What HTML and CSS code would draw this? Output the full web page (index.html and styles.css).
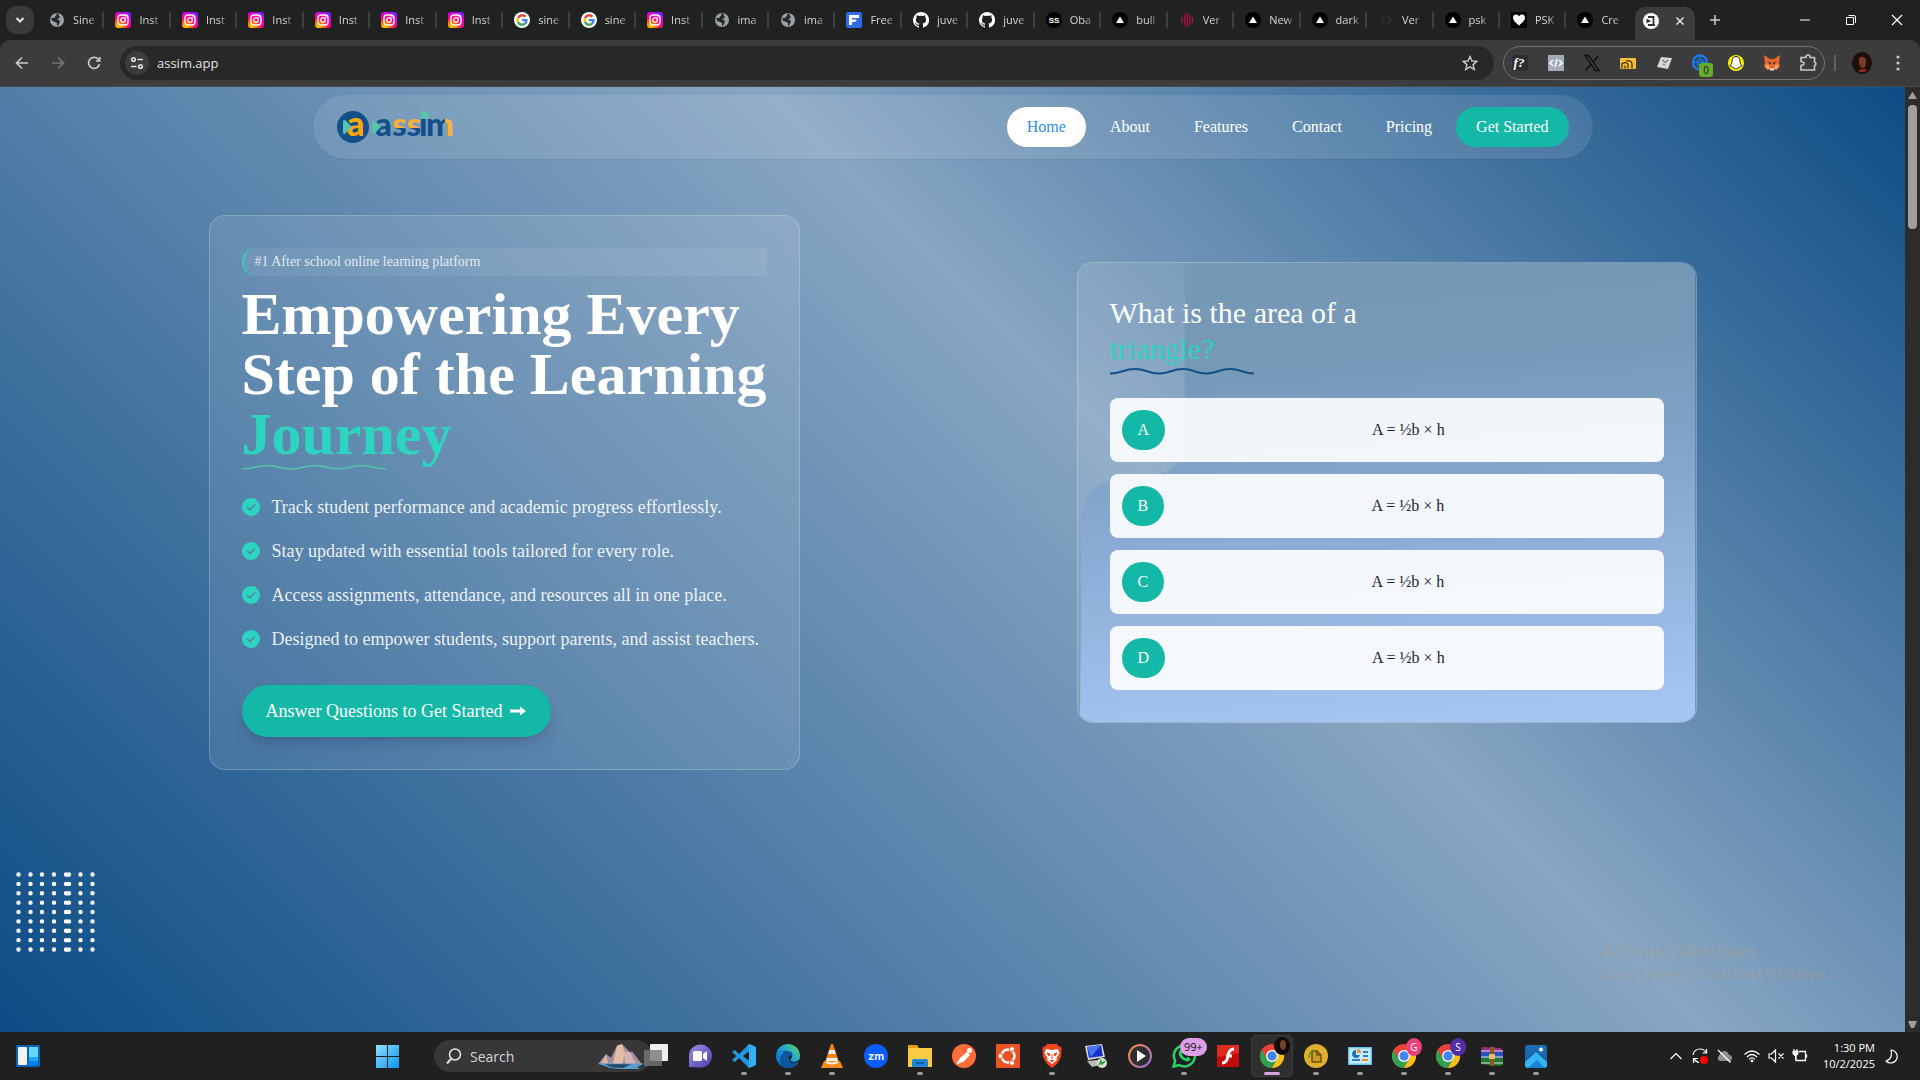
FILE: index.html
```
<!DOCTYPE html>
<html lang="en">
<head>
<meta charset="utf-8">
<title>assim.app</title>
<link rel="stylesheet" href="styles.css">
</head>
<body>
<svg class="sprite" aria-hidden="true">
  <defs>
    <radialGradient id="insta-fill" cx="0.2" cy="1" r="1.1"><stop offset="0" stop-color="#ffd400"/><stop offset="0.3" stop-color="#ff7a00"/><stop offset="0.55" stop-color="#ff0a6c"/><stop offset="0.8" stop-color="#e800c8"/><stop offset="1" stop-color="#7a1cff"/></radialGradient>
    <linearGradient id="win-fill" x1="0" y1="0" x2="1" y2="1"><stop offset="0" stop-color="#8fe0ff"/><stop offset="1" stop-color="#0a94f0"/></linearGradient>
    <linearGradient id="edge-fill" x1="0" y1="1" x2="1" y2="0"><stop offset="0" stop-color="#0c59a4"/><stop offset="0.5" stop-color="#1b9de2"/><stop offset="1" stop-color="#5fe05a"/></linearGradient>
    <linearGradient id="photo-fill" x1="0" y1="0" x2="0" y2="1"><stop offset="0" stop-color="#1c6fb8"/><stop offset="1" stop-color="#1258a0"/></linearGradient>
    <linearGradient id="teams-fill" x1="0" y1="0" x2="1" y2="1"><stop offset="0" stop-color="#9a8fe0"/><stop offset="1" stop-color="#4a3fae"/></linearGradient>
    <linearGradient id="media-ring" x1="0" y1="0" x2="1" y2="1"><stop offset="0" stop-color="#ff8a3c"/><stop offset="1" stop-color="#9a6ae8"/></linearGradient>
    <symbol id="i-globe" viewBox="0 0 16 16"><circle cx="8" cy="8" r="7" fill="#9aa0a6"/><path d="M2 6.500q2-1 3.500-.5 0-2 2-2.500L7 1.500 10 2q-1 2 1 2.500l-1 2-2 .5 3 2-1 3-2 2.500v-3.500L5 9.500Q3 9.500 2 6.500z" fill="#26292a"/></symbol>
    <symbol id="i-insta" viewBox="0 0 16 16"><rect width="16" height="16" rx="3" fill="url(#insta-fill)"/><rect x="3" y="3" width="10" height="10" rx="3" fill="none" stroke="#fff" stroke-width="1.300"/><circle cx="8" cy="8" r="2.300" fill="none" stroke="#fff" stroke-width="1.300"/><circle cx="11" cy="5" r=".8" fill="#fff"/></symbol>
    <symbol id="i-google" viewBox="0 0 16 16"><circle cx="8" cy="8" r="8" fill="#fff"/><g fill="none" stroke-width="2.300"><path d="M11.500 4.800A4.500 4.500 0 0 0 4 6" stroke="#ea4335"/><path d="M4 6a4.500 4.500 0 0 0 0 4" stroke="#fbbc05"/><path d="M4 10a4.500 4.500 0 0 0 7 1.600" stroke="#34a853"/><path d="M11 11.600A4.500 4.500 0 0 0 12.500 8.200H8" stroke="#4285f4"/></g></symbol>
    <symbol id="i-free" viewBox="0 0 16 16"><rect width="16" height="16" rx="2" fill="#2f6bed"/><path d="M3 3h10v3H6v1.500h5l-2 2.500H6v3H3z" fill="#fff"/></symbol>
    <symbol id="i-github" viewBox="0 0 16 16"><path d="M8 0a8 8 0 0 0-2.500 15.600c.4.100.5-.2.500-.4v-1.400c-2.200.5-2.700-1-2.700-1-.4-.9-.9-1.200-.9-1.200-.7-.5.100-.5.100-.5.800.1 1.200.8 1.200.8.700 1.200 1.900.9 2.300.7.100-.5.300-.9.500-1.100-1.800-.2-3.600-.9-3.600-4 0-.9.300-1.600.8-2.100-.1-.2-.4-1 .1-2.100 0 0 .7-.2 2.200.8a7.500 7.500 0 0 1 4 0c1.500-1 2.200-.8 2.200-.8.400 1.100.2 1.900.1 2.100.5.600.8 1.300.8 2.100 0 3.100-1.900 3.800-3.700 4 .3.300.6.800.6 1.500v2.200c0 .2.100.5.600.4A8 8 0 0 0 8 0z" fill="#fff"/></symbol>
    <symbol id="i-ss" viewBox="0 0 16 16"><circle cx="8" cy="8" r="8" fill="#000"/><text x="8" y="10.500" text-anchor="middle" font-family="Liberation Sans, sans-serif" font-weight="700" font-size="8" fill="#fff">SS</text></symbol>
    <symbol id="i-vercel" viewBox="0 0 16 16"><circle cx="8" cy="8" r="8" fill="#000"/><path d="M8 4.500 12 11H4z" fill="#fff"/></symbol>
    <symbol id="i-bars" viewBox="0 0 16 16"><path d="M3 5v6M6 2v12M8.500 0v16M11 3v10M13.500 5v6" stroke="#a3123c" stroke-width="1.400"/></symbol>
    <symbol id="i-dim" viewBox="0 0 16 16"><path d="M6 4 4 6v4l2 2M9 4l3 2v4l-3 2" fill="none" stroke="#303333" stroke-width="1.500"/></symbol>
    <symbol id="i-heart" viewBox="0 0 16 16"><rect width="16" height="16" rx="1" fill="#000"/><path d="M8 13.500C3 9.500 2 7.500 2 5.500 2 2 6.500 1.500 8 4.500 9.500 1.500 14 2 14 5.500c0 2-1 4-6 8z" fill="#fff"/></symbol>
    <symbol id="i-assim" viewBox="0 0 16 16"><circle cx="8" cy="8" r="8" fill="#fff"/><path d="M5 4h5.500v8.500M5 12h7" fill="none" stroke="#333" stroke-width="1.800"/><path d="M3.500 5.500 8 8l-4.500 2.500z" fill="#333"/></symbol>
    <symbol id="i-chrome" viewBox="0 0 24 24"><circle cx="12" cy="12" r="12" fill="#ea4335"/><path d="M1.600 6A12 12 0 0 0 12 24l5.200-9L12 12 6.800 15z" fill="#2fa14f"/><path d="M12 24A12 12 0 0 0 22.400 6H12l5.200 9z" fill="#fbc116"/><circle cx="12" cy="12" r="6" fill="#fff"/><circle cx="12" cy="12" r="4.700" fill="#4285f4"/></symbol>
    <symbol id="i-check" viewBox="0 0 18 18"><circle cx="9" cy="9" r="9" fill="#2dd4bf"/><path d="m5.500 9.300 2.500 2.500 4.500-4.800" fill="none" stroke="#5583a9" stroke-width="1.600" stroke-linecap="round" stroke-linejoin="round"/></symbol>
    <symbol id="i-wave" viewBox="0 0 144 8" preserveAspectRatio="none"><path d="M0 6.500C11 6.500 14 2 25 2S38 6.500 49 6.500 62 2 73 2 85 6.500 96 6.500 109 2 120 2 133 6.500 144 6.500" fill="none" stroke="currentColor" stroke-width="2"/></symbol>
  </defs>
</svg>

<header class="chrome">
  <div class="tabstrip">
    <button class="tab-search" aria-label="Search tabs"><svg width="12" height="12" viewBox="0 0 12 12"><path d="m2.500 4 3.500 3.500L9.500 4" fill="none" stroke="#e3e3e3" stroke-width="2"/></svg></button>
    <nav class="tabs" aria-label="Open tabs">
      <a class="tab" href="#"><svg><use href="#i-globe"/></svg><span>Sine</span></a>
      <a class="tab" href="#"><svg><use href="#i-insta"/></svg><span>Inst</span></a>
      <a class="tab" href="#"><svg><use href="#i-insta"/></svg><span>Inst</span></a>
      <a class="tab" href="#"><svg><use href="#i-insta"/></svg><span>Inst</span></a>
      <a class="tab" href="#"><svg><use href="#i-insta"/></svg><span>Inst</span></a>
      <a class="tab" href="#"><svg><use href="#i-insta"/></svg><span>Inst</span></a>
      <a class="tab" href="#"><svg><use href="#i-insta"/></svg><span>Inst</span></a>
      <a class="tab" href="#"><svg><use href="#i-google"/></svg><span>sine</span></a>
      <a class="tab" href="#"><svg><use href="#i-google"/></svg><span>sine</span></a>
      <a class="tab" href="#"><svg><use href="#i-insta"/></svg><span>Inst</span></a>
      <a class="tab" href="#"><svg><use href="#i-globe"/></svg><span>ima</span></a>
      <a class="tab" href="#"><svg><use href="#i-globe"/></svg><span>ima</span></a>
      <a class="tab" href="#"><svg><use href="#i-free"/></svg><span>Free</span></a>
      <a class="tab" href="#"><svg><use href="#i-github"/></svg><span>juve</span></a>
      <a class="tab" href="#"><svg><use href="#i-github"/></svg><span>juve</span></a>
      <a class="tab" href="#"><svg><use href="#i-ss"/></svg><span>Oba</span></a>
      <a class="tab" href="#"><svg><use href="#i-vercel"/></svg><span>bull</span></a>
      <a class="tab" href="#"><svg><use href="#i-bars"/></svg><span>Ver</span></a>
      <a class="tab" href="#"><svg><use href="#i-vercel"/></svg><span>New</span></a>
      <a class="tab" href="#"><svg><use href="#i-vercel"/></svg><span>dark</span></a>
      <a class="tab" href="#"><svg><use href="#i-dim"/></svg><span>Ver</span></a>
      <a class="tab" href="#"><svg><use href="#i-vercel"/></svg><span>psk</span></a>
      <a class="tab" href="#"><svg><use href="#i-heart"/></svg><span>PSK</span></a>
      <a class="tab" href="#"><svg><use href="#i-vercel"/></svg><span>Cre</span></a>
    </nav>
    <div class="tab-active">
      <svg width="16" height="16"><use href="#i-assim"/></svg>
      <button class="plain" aria-label="Close tab"><svg width="10" height="10" viewBox="0 0 10 10"><path d="m1.500 1.500 7 7m0-7-7 7" stroke="#e3e3e3" stroke-width="1.500"/></svg></button>
    </div>
    <button class="plain new-tab" aria-label="New tab"><svg width="12" height="12" viewBox="0 0 12 12"><path d="M6 1v10M1 6h10" stroke="#cfcfcf" stroke-width="1.500"/></svg></button>
    <div class="window-buttons">
      <button class="plain" aria-label="Minimize"><svg width="12" height="12" viewBox="0 0 12 12"><path d="M1 6h10" stroke="#fff" stroke-width="1"/></svg></button>
      <button class="plain" aria-label="Restore"><svg width="12" height="12" viewBox="0 0 12 12"><path d="M1.500 3.500h7v7h-7zM3.500 1.500H9q1.500 0 1.500 1.500v6" fill="none" stroke="#fff"/></svg></button>
      <button class="plain" aria-label="Close"><svg width="12" height="12" viewBox="0 0 12 12"><path d="m1 1 10 10m0-10L1 11" stroke="#fff" stroke-width="1.200"/></svg></button>
    </div>
  </div>
  <div class="toolbar">
    <div class="history">
      <button class="plain" aria-label="Back"><svg width="14" height="14" viewBox="0 0 14 14"><path d="M13 7H2m5-5.500L1.500 7 7 12.500" fill="none" stroke="#c9c9c9" stroke-width="1.700"/></svg></button>
      <button class="plain" aria-label="Forward"><svg width="14" height="14" viewBox="0 0 14 14"><path d="M1 7h11M7 1.500 12.500 7 7 12.500" fill="none" stroke="#757575" stroke-width="1.700"/></svg></button>
      <button class="plain" aria-label="Reload"><svg width="14" height="14" viewBox="0 0 14 14"><path d="M12.500 8A5.500 5.500 0 1 1 11 3l1.500 1.500M12.700 1v4H9" fill="none" stroke="#c9c9c9" stroke-width="1.700"/></svg></button>
    </div>
    <div class="omnibox">
      <button class="site-info" aria-label="Site information"><svg width="14" height="14" viewBox="0 0 14 14"><g fill="none" stroke="#dedede" stroke-width="1.600"><circle cx="3.500" cy="3.500" r="1.800"/><path d="M7.500 3.500H13M1 10.500h5.500"/><circle cx="10.500" cy="10.500" r="1.800"/></g></svg></button>
      <input class="url" type="text" aria-label="Address" value="assim.app">
      <button class="plain" aria-label="Bookmark"><svg width="16" height="16" viewBox="0 0 16 16"><path d="m8 1.500 2 4.500 4.800.4-3.700 3.200 1.200 4.800L8 11.800l-4.300 2.600 1.200-4.800L1.200 6.400 6 6z" fill="none" stroke="#c9c9c9" stroke-width="1.400"/></svg></button>
    </div>
    <div class="extensions">
      <svg viewBox="0 0 18 18"><rect x="1" y="1" width="16" height="16" rx="2" fill="#2c2d2e"/><text x="8" y="13" text-anchor="middle" font-family="Liberation Serif, serif" font-style="italic" font-weight="700" font-size="13" fill="#fff">f?</text></svg>
      <svg viewBox="0 0 18 18"><rect x="1" y="1" width="16" height="16" fill="#a4adbb"/><path d="M6 6 3 9l3 3M12 6l3 3-3 3M10 5l-2 8" fill="none" stroke="#fff" stroke-width="1.400"/></svg>
      <svg viewBox="0 0 18 18"><path d="M2 1.500h3.500L16 16.500h-3.500zM15.500 1.500 10.300 7.800M8 10.200l-5.500 6.300" fill="none" stroke="#0b0b0b" stroke-width="1.300"/></svg>
      <svg viewBox="0 0 18 18"><rect x="1" y="4" width="16" height="11" rx="1" fill="#f5bd3a"/><path d="M3 14.500V9.500q5-2 6 1v4M6 14.500v-3M7 7q6-1 6 3v4.500" fill="none" stroke="#3a2b0a" stroke-width="1.200"/></svg>
      <svg viewBox="0 0 18 18"><path d="m6 3 11 1-4 11-11-2z" fill="#d8d8d8"/><path d="m7.500 6 2.500 2.500L13.500 6M8 10l2 1" fill="none" stroke="#777" stroke-width="1.200"/></svg>
      <span class="ext-count"><svg viewBox="0 0 18 18"><circle cx="9" cy="8.500" r="7" fill="none" stroke="#1877f2" stroke-width="2.500"/><circle cx="9" cy="8.500" r="3" fill="none" stroke="#1877f2" stroke-width="1.500"/><path d="M9 1v15M1.500 8.500h15" stroke="#1877f2"/></svg><b>0</b></span>
      <svg viewBox="0 0 18 18"><circle cx="9" cy="9" r="8" fill="#fff200"/><path d="M9 2.500c3 0 4 2 4 5 0 2 1 3 2 4-2 1-2 1-2.500 2-2 0-2 1.500-3.500 1.500S7.500 13.500 5.500 13.500C5 12.500 5 12.500 3 11.500c1-1 2-2 2-4 0-3 1-5 4-5z" fill="#fff" stroke="#222" stroke-width="1"/></svg>
      <svg viewBox="0 0 18 18"><path d="m1 1 6 4h4l6-4-1 8 1 4-4 3-2-1H7l-2 1-4-3 1-4z" fill="#e8662a"/><path d="m2 10 4 1 1 4-3 .5zM16 10l-4 1-1 4 3 .5z" fill="#f7a066"/><path d="M6 8l1.500 2M12 8l-1.500 2" stroke="#263238" stroke-width="1.400"/><path d="M7 14.500h4v2H7z" fill="#ddd"/></svg>
      <svg viewBox="0 0 18 18"><path d="M2 3.500h5V3a2 2 0 0 1 4 0v.5h4.500v4.500a1.800 1.800 0 0 1 0 3.500v4.500H2v-4.500q3-.5 3-2T2 7.500z" fill="none" stroke="#c9c9c9" stroke-width="1.600"/></svg>
    </div>
    <span class="toolbar-rule"></span>
    <svg class="avatar" width="20" height="24" viewBox="0 0 20 24"><ellipse cx="10" cy="12" rx="10" ry="11" fill="#1f0f0b"/><path d="M7 7q3-3 7 1v5q-1 4-3 4t-4-4z" fill="#7a3a25"/><path d="M6 20q2-2 5-2t4 1q-3 4-9 1z" fill="#8c2a22"/></svg>
    <button class="plain menu" aria-label="Menu"><svg width="4" height="18" viewBox="0 0 4 18" fill="#c9c9c9"><circle cx="2" cy="3" r="1.600"/><circle cx="2" cy="9" r="1.600"/><circle cx="2" cy="15" r="1.600"/></svg></button>
  </div>
</header>

<div class="window">
  <div class="page">
    <nav class="site-nav">
      <a class="logo" href="#" aria-label="assim">
        <svg width="116" height="34" viewBox="0 0 116 34">
          <defs>
            <linearGradient id="word-s" x1="0" y1="0" x2="0" y2="1"><stop offset="0.62" stop-color="#fbb03b"/><stop offset="0.63" stop-color="#13508a"/></linearGradient>
            <linearGradient id="word-m" x1="0" y1="0" x2="1" y2="0"><stop offset="0.68" stop-color="#13508a"/><stop offset="0.69" stop-color="#fbb03b"/></linearGradient>
          </defs>
          <circle cx="16" cy="17" r="16" fill="#13508a"/>
          <g font-family="Lato, sans-serif" font-weight="900">
            <text x="10" y="26" font-size="34" fill="#ffa800">a</text>
            <path d="M6 11q1-2 3 0l6 6-6 6q-2 2-3 0z" fill="#56c5ab"/>
            <text x="38" y="26" font-size="33" fill="#13508a">a</text>
            <path d="M35 12q1-2 3 0l6 5-6 6q-2 2-3 0z" fill="#56c5ab"/>
            <text x="55" y="26" font-size="33" fill="url(#word-s)">ss</text>
            <text x="82" y="26" font-size="33" fill="#13508a">ı</text>
            <text x="89" y="26" font-size="33" fill="url(#word-m)">m</text>
          </g>
          <ellipse cx="88" cy="5" rx="4" ry="4" fill="#56c5ab"/>
        </svg>
      </a>
      <div class="nav-links">
        <a class="nav-link current" href="#">Home</a>
        <a class="nav-link" href="#">About</a>
        <a class="nav-link" href="#">Features</a>
        <a class="nav-link" href="#">Contact</a>
        <a class="nav-link" href="#">Pricing</a>
        <button class="nav-link cta">Get Started</button>
      </div>
    </nav>

    <main class="hero">
      <section class="intro">
        <p class="tagline">#1 After school online learning platform</p>
        <h1>Empowering Every<br>Step of the Learning<br><span class="accent">Journey</span></h1>
        <svg class="wave wave-green" width="144" height="6"><use href="#i-wave"/></svg>
        <ul class="benefits">
          <li><svg width="18" height="18"><use href="#i-check"/></svg>Track student performance and academic progress effortlessly.</li>
          <li><svg width="18" height="18"><use href="#i-check"/></svg>Stay updated with essential tools tailored for every role.</li>
          <li><svg width="18" height="18"><use href="#i-check"/></svg>Access assignments, attendance, and resources all in one place.</li>
          <li><svg width="18" height="18"><use href="#i-check"/></svg>Designed to empower students, support parents, and assist teachers.</li>
        </ul>
        <button class="start">Answer Questions to Get Started
          <svg width="16" height="10" viewBox="0 0 16 10"><path d="M0 3.500h10V0.500L16 5l-6 4.500V6.500H0z" fill="#fff"/></svg>
        </button>
      </section>

      <section class="quiz">
        <svg class="quiz-shape" viewBox="0 0 620 460" preserveAspectRatio="none" aria-hidden="true">
          <defs><linearGradient id="quiz-fill" x1="0.450" y1="0" x2="0.550" y2="1"><stop offset="0" stop-color="#7598b4"/><stop offset="0.200" stop-color="#7799b8"/><stop offset="0.450" stop-color="#82a4cb"/><stop offset="1" stop-color="#a6c4f1"/></linearGradient></defs>
          <path d="M107 0H619V460H2L4 250Q7 226 30 220 92 216 101 198 107 190 107 170z" fill="url(#quiz-fill)"/>
        </svg>
        <h2>What is the area of a<br><span class="accent">triangle?</span></h2>
        <svg class="wave wave-navy" width="144" height="8"><use href="#i-wave"/></svg>
        <div class="options">
          <button class="option"><span class="letter">A</span><span class="answer">A = ½b × h</span></button>
          <button class="option"><span class="letter">B</span><span class="answer">A = ½b × h</span></button>
          <button class="option"><span class="letter">C</span><span class="answer">A = ½b × h</span></button>
          <button class="option"><span class="letter">D</span><span class="answer">A = ½b × h</span></button>
        </div>
      </section>
    </main>

    <svg class="dots" width="80" height="80" viewBox="0 0 80 80" aria-hidden="true">
      <g fill="none" stroke="#fff" stroke-width="4.400" stroke-linecap="round" stroke-dasharray="0 9.375">
        <path d="M2.500 2.500V78M14.500 2.500V78M26 2.500V78M38 2.500V78M50 2.500V78M53 2.500V78M64.500 2.500V78M76.500 2.500V78"/>
      </g>
    </svg>
    <div class="watermark"><p>Activate Windows</p><small>Go to Settings to activate Windows.</small></div>
  </div>
  <div class="scrollbar">
    <svg width="9" height="7" viewBox="0 0 9 7"><path d="M4.500 0Q5 0 9 7H0Q4 0 4.500 0z" fill="#9f9f9f"/></svg>
    <span class="thumb"></span>
    <svg class="down" width="9" height="7" viewBox="0 0 9 7"><path d="M0 0h9L6 7H3z" fill="#9f9f9f"/></svg>
  </div>
</div>

<footer class="taskbar">
  <svg class="widgets" width="24" height="22" viewBox="0 0 24 22"><rect width="24" height="22" rx="1" fill="#0a63b5"/><rect x="2" y="2" width="9" height="18" rx="1" fill="#f1f1f1"/><path d="M13 2h9v10h-9z" fill="#64d7ff"/><path d="M13 12h9v4h-9z" fill="#1ea4ff"/><path d="M13 16h9v4h-9z" fill="#0583ee"/></svg>
  <svg class="start-logo" width="23" height="23" viewBox="0 0 23 23"><path d="M0 0h11v11H0zM12 0h11v11H12zM0 12h11v11H0zM12 12h11v11H12z" fill="url(#win-fill)"/></svg>
  <label class="search">
    <svg width="16" height="16" viewBox="0 0 16 16"><circle cx="9" cy="6.500" r="5.500" fill="none" stroke="#e6e6e6" stroke-width="1.500"/><path d="m5 11-4 4.500" stroke="#e6e6e6" stroke-width="2"/></svg>
    <input type="text" placeholder="Search" aria-label="Search">
    <svg width="46" height="26" viewBox="0 0 46 28" preserveAspectRatio="none"><path d="M0 23 8 12l5 4 6-13 5-2 8 9 2-1 10 14z" fill="#a28fa6"/><path d="m19 3 5-2 3 10-3 12h-9z" fill="#e4bda2"/><path d="m32 10 6 13H28l-3-14z" fill="#d4b3b0"/><path d="M8 12 3 22h7z" fill="#e2b49a"/><path d="M0 22h46l-7 4 3 2-14 2-6-2-10-1z" fill="#5a9bd0"/><path d="M7 23h26l-8 4-12-1z" fill="#27466e"/></svg>
  </label>
  <div class="apps">
    <svg class="app" viewBox="0 0 24 24"><rect x="6" y="0" width="18" height="17" rx="1" fill="#efefef"/><rect x="0" y="6" width="18" height="16" rx="1" fill="#777" fill-opacity=".8"/></svg>
    <svg class="app" viewBox="0 0 24 24"><path d="M1 23V12a11.500 11.500 0 1 1 11.500 11.500z" fill="url(#teams-fill)"/><rect x="5" y="7" width="9" height="10" rx="1.500" fill="#fff"/><path d="m15 10 4-3v10l-4-3z" fill="#fff"/></svg>
    <span class="app-slot running"><svg class="app" viewBox="0 0 24 24"><path d="m17 0 7 3v18l-7 3L7 14l-4 4-3-2 4.500-4L0 8l3-2 4 4zM17.500 7 11 12l6.500 5z" fill="#2196e3" fill-rule="evenodd"/><path d="m17 0 7 3v18l-7 3z" fill="#35aef5"/></svg></span>
    <span class="app-slot running"><svg class="app" viewBox="0 0 24 24"><circle cx="12" cy="12" r="12" fill="url(#edge-fill)"/><path d="M1 10Q5 6 12 7q6 1 4 6-3 4 1 5 3 0 6-2-4 8-11 8-8-1-8-8 0-5 4-8-5-1-8 2z" fill="#0e55a0"/><path d="M13 12q2-1 3 0 0 2-2 3 0 3 4 3 3 0 5-2l2-2v4l-9 1q-4-2-3-7z" fill="#202020"/></svg></span>
    <span class="app-slot running"><svg class="app" viewBox="0 0 24 24"><path d="M11 0h2l6 18H5z" fill="#f58412"/><path d="M9.500 6h5l1.500 4H8zM7 14h10l1 4H6z" fill="#eee"/><path d="M4 17h16l3 7H1z" fill="#f58a14"/><path d="M6 18q6 3 12 0" fill="none" stroke="#eee" stroke-width="2"/></svg></span>
    <svg class="app" viewBox="0 0 24 24"><circle cx="12" cy="12" r="12" fill="#0b5cff"/><text x="12" y="16" text-anchor="middle" font-family="Inter, sans-serif" font-weight="600" font-size="11" fill="#fff">zm</text></svg>
    <span class="app-slot running"><svg class="app" viewBox="0 0 24 24"><path d="M0 1h9l2 3v5H0z" fill="#e0a010"/><rect y="4" width="24" height="19" rx="1" fill="#fccb45"/><path d="M4 23v-6q0-2 2-2h12q2 0 2 2v6z" fill="#1d86d6"/><path d="M8 19h8" stroke="#0e5da0" stroke-width="2"/></svg></span>
    <svg class="app" viewBox="0 0 24 24"><circle cx="12" cy="12" r="12" fill="#ff6c37"/><path d="m6 19 3-5 6-5 2 2-6 6zM16 8l3-2" fill="#fff" stroke="#fff" stroke-width="1.500"/><circle cx="17.500" cy="6.500" r="2.500" fill="#fff"/></svg>
    <svg class="app" viewBox="0 0 24 24"><rect width="24" height="24" fill="#e95420"/><circle cx="12" cy="12" r="6.500" fill="none" stroke="#fff" stroke-width="2.500"/><circle cx="4.500" cy="12" r="2.500" fill="#fff" stroke="#e95420"/><circle cx="16" cy="5" r="2.500" fill="#fff" stroke="#e95420"/><circle cx="16" cy="19" r="2.500" fill="#fff" stroke="#e95420"/></svg>
    <span class="app-slot running"><svg class="app" viewBox="0 0 24 24"><path d="m7 0h10l2 2.500 2.500.5L21 13l-4 7-5 4-5-4-4-7-.5-10L5 2.500z" fill="#f7431c"/><path d="m6 5 6 1 6-1 1.500 4-3 5 .5 2-5 4-5-4 .5-2-3-5z" fill="#fff"/><path d="m7 9 3 1-1 2zM17 9l-3 1 1 2zM12 10v5m-2 1 2 2 2-2" fill="#f7431c" stroke="#f7431c"/></svg></span>
    <svg class="app" viewBox="0 0 24 24"><path d="m1 2 17-2 3 13-17 3z" fill="#ddd"/><path d="m3 3 14-2 2 11-14 2z" fill="#1830c8"/><path d="m3 3 14-2-10 12z" fill="#4a72ee"/><path d="m3 17 11-1 6 4-12 3z" fill="#bbb"/><circle cx="18" cy="19" r="5" fill="#d9e4d2"/><path d="m15 21 2-4 1 3 3-3" fill="none" stroke="#2c8e2c" stroke-width="1.500"/></svg>
    <svg class="app" viewBox="0 0 24 24"><circle cx="12" cy="12" r="11" fill="#2d2d2d" stroke="url(#media-ring)" stroke-width="2"/><path d="m9 6 9 6-9 6z" fill="#fff"/></svg>
    <span class="app-slot running"><svg class="app" viewBox="0 0 24 24"><path d="m1.500 22.500 1.700-5.500a10.500 10.500 0 1 1 4 4z" fill="none" stroke="#25d366" stroke-width="2.500"/><path d="M8 6q2-1 2.500 2.500L9.500 10q1.500 3 4.500 4.500l1.500-1.500q3 1 3 2-1 3-4 2.500Q7 15 6.500 9z" fill="#25d366"/></svg><b class="count">99+</b></span>
    <svg class="app" viewBox="0 0 24 24"><rect x="1" y="1" width="22" height="22" fill="#c20b0b"/><path d="M1 1h22v8L1 13z" fill="#df2a22"/><path d="M18 5q-5 0-6 7-1 7-6 7M10 12h6" fill="none" stroke="#fff" stroke-width="2.800"/></svg>
    <span class="app-slot active"><svg class="app"><use href="#i-chrome"/></svg><svg class="face" width="16" height="18" viewBox="0 0 16 18"><ellipse cx="8" cy="9" rx="8" ry="9" fill="#140907"/><ellipse cx="9" cy="8" rx="3" ry="5" fill="#7a4029"/></svg></span>
    <span class="app-slot running"><svg class="app" viewBox="0 0 24 24"><circle cx="12" cy="12" r="12" fill="#e0b02c"/><path d="M8 7h5l4 4v7H8zM13 7v4h4" fill="#c79a20" stroke="#6b4f10" stroke-width="1.500"/><path d="M5 14q0-6 5-8" fill="none" stroke="#5d8e2a" stroke-width="1.500"/></svg></span>
    <span class="app-slot running"><svg class="app" viewBox="0 0 24 24"><rect y="3" width="24" height="18" rx="1" fill="#6ec4f4"/><rect x="1.500" y="4.500" width="21" height="15" fill="#c9ebff"/><path d="M8 6a4 4 0 1 0 4 5H8z" fill="#1d6fbf"/><path d="M9 5a4 4 0 0 1 4 4H9z" fill="#f5902a"/><path d="M15 8h5M15 12h5M4 16h8" stroke="#2d7fc4" stroke-width="2"/><path d="M14 16h6" stroke="#e88b2a" stroke-width="2"/></svg></span>
    <span class="app-slot running"><svg class="app"><use href="#i-chrome"/></svg><b class="profile pink">G</b></span>
    <span class="app-slot running"><svg class="app"><use href="#i-chrome"/></svg><b class="profile violet">S</b></span>
    <span class="app-slot running"><svg class="app" viewBox="0 0 24 24"><path d="m2 3 19 1 2 4H1z" fill="#9c2f87"/><path d="M1 8h22v6H1z" fill="#2a4fc9"/><path d="M1 14h22v7l-4 1L1 20z" fill="#257a33"/><path d="M1 7h22M1 13h22M1 19h22" stroke="#e0e0e0"/><path d="M10 3h4v19h-4z" fill="#8a5a24"/><path d="M9 10h6v5H9z" fill="#e3c35c"/></svg></span>
    <span class="app-slot running"><svg class="app" viewBox="0 0 24 24"><rect x="1" y="1" width="22" height="23" rx="3" fill="url(#photo-fill)"/><path d="M1 18 11 9q1-1 2 0l10 9v3q0 3-3 3H4q-3 0-3-3z" fill="#35b5f2"/><path d="m4 24 9-8 8 8z" fill="#1b82d4"/><circle cx="17" cy="5.500" r="2" fill="#fff"/></svg></span>
  </div>
  <div class="tray">
    <svg width="16" height="16" viewBox="0 0 16 16"><path d="m2.500 11 5.500-5.500 5.500 5.500" fill="none" stroke="#fff" stroke-width="1.200"/></svg>
    <svg width="16" height="16" viewBox="0 0 16 16"><path d="M1 7q1-6 7-6 4 0 6 3.500M14.500 1v4h-4M7 14.500q-4-1-5-4M1.500 15v-4.500H6" fill="none" stroke="#fff" stroke-width="1.200"/><circle cx="12" cy="12" r="4" fill="#f00"/></svg>
    <svg width="16" height="16" viewBox="0 0 16 16"><path d="M3.500 13a3.500 3.500 0 0 1 0-6q1-4 5-4 3.500 0 4.500 4a3 3 0 0 1 0 6z" fill="#8d8d8d"/><path d="m2 2 12.500 12.500" stroke="#fff" stroke-width="1.300"/></svg>
    <svg class="wifi" width="16" height="16" viewBox="0 0 16 16"><path d="M.5 6.500q7.500-7 15 0M3 9q5-5 10 0M5.200 11.300q2.800-2.800 5.600 0" fill="none" stroke="#fff" stroke-width="1.200"/><circle cx="8" cy="13" r="1.300" fill="#fff"/></svg>
    <svg width="16" height="16" viewBox="0 0 16 16"><path d="M1 6h2.500l4-4v12l-4-4H1zM10.500 5.500l5 5m0-5-5 5" fill="none" stroke="#fff" stroke-width="1.200"/></svg>
    <svg width="16" height="16" viewBox="0 0 16 16"><path d="M7 3.500h6.500v9H4V8M14.500 6.500v3" fill="none" stroke="#fff" stroke-width="1.300"/><path d="M1 3h5v3L4.500 7.500h-2L1 6zM2 1v2M5 1v2M3.500 7v4.500" fill="#fff" stroke="#fff"/></svg>
    <p class="clock">1:30 PM<br>10/2/2025</p>
    <svg width="15" height="15" viewBox="0 0 15 15"><path d="M6 1a6.500 6.500 0 1 1-5 11q7-2 5-11z" fill="none" stroke="#fff" stroke-width="1.200" stroke-linejoin="round"/></svg>
  </div>
</footer>
</body>
</html>
```
FILE: styles.css
```
* { box-sizing: border-box; }

body {
  margin: 0;
  min-height: 100vh;
  display: flex;
  flex-direction: column;
  font-family: "Open Sans", "Noto Sans", sans-serif;
  background: #202020;
  overflow: hidden;
}

p, h1, h2, ul { margin: 0; padding: 0; }
a { text-decoration: none; color: inherit; }
button, input { font: inherit; color: inherit; border: 0; margin: 0; }
button { cursor: pointer; }
svg { display: block; flex: none; }
.sprite { position: absolute; width: 0; height: 0; }
.plain { background: none; padding: 0; display: grid; place-items: center; }

/* browser window */
.chrome { background: #1f2221; }
.tabstrip { display: flex; align-items: center; height: 40px; }
.tab-search {
  width: 28px; height: 28px; margin: 0 4px 0 6px; padding: 0;
  display: grid; place-items: center;
  border-radius: 10px; background: #393b3a;
}
.tabs { flex: 1; display: flex; min-width: 0; }
.tab {
  flex: 1 1 0; min-width: 0; height: 16px;
  display: flex; align-items: center; gap: 8px;
  padding: 0 4px 0 11px;
  border-right: 2px solid #3d3f3e;
  font-size: 11px; color: #d5d5d5;
}
.tab:last-child { border-color: transparent; }
.tab svg { width: 16px; height: 16px; }
.tab span {
  white-space: nowrap; line-height: 16px;
  mask-image: linear-gradient(90deg, #000 70%, rgba(0, 0, 0, .4));
}
.tab-active {
  width: 60px; height: 33px; align-self: flex-end; margin-left: 2px;
  display: flex; align-items: center; justify-content: space-between;
  padding: 0 10px 6px 8px;
  background: #3c3c3c; border-radius: 10px 10px 0 0;
}
.new-tab { width: 40px; height: 28px; }
.window-buttons { display: flex; margin-left: 47px; }
.window-buttons button { width: 46px; height: 38px; }

.toolbar {
  display: flex; align-items: center; height: 47px;
  background: #3c3c3c; border-radius: 10px 10px 0 0;
  border-bottom: 1px solid #4a4a4a;
}
.history { display: flex; padding-left: 4px; width: 120px; }
.history button { width: 36px; height: 34px; }
.omnibox {
  flex: 1; height: 34px; display: flex; align-items: center;
  padding: 0 16px 0 5px; border-radius: 17px; background: #282828;
}
.site-info { width: 24px; height: 24px; padding: 0; border-radius: 50%; background: #3c3c3c; display: grid; place-items: center; }
.url { flex: 1; padding: 0 8px; background: none; font-size: 13px; color: #e3e3e3; outline: 0; }
.extensions {
  display: flex; align-items: center; gap: 18px;
  height: 34px; margin-left: 9px; padding: 0 7px;
  border: 1px solid #747474; border-radius: 17px;
}
.extensions svg { width: 18px; height: 18px; }
.ext-count { position: relative; }
.ext-count b {
  position: absolute; left: 8px; top: 9px; width: 14px; height: 14px;
  border-radius: 3px; background: #66ad2b; color: #111;
  font-size: 10px; line-height: 14px; text-align: center; font-weight: 400;
}
.toolbar-rule { width: 2px; height: 16px; margin: 0 16px 0 9px; background: #5f6060; }
.menu { width: 44px; height: 34px; margin-left: 4px; }

/* web page */
.window { flex: 1; display: flex; min-height: 0; }
.page {
  flex: 1; position: relative;
  padding-top: 8px;
  background: linear-gradient(45deg, #0d4c85 0%, #88a6c3 60%, #0d4c85 100%);
  font-family: "Liberation Serif", "Times New Roman", serif;
  color: #fff;
}
.site-nav {
  max-width: 1280px; height: 64px; margin: 0 auto; padding: 0 24px;
  display: flex; align-items: center; justify-content: space-between;
  border-radius: 32px;
  background: rgba(255, 255, 255, .1);
  box-shadow: 0 1px 2px rgba(0, 0, 0, .06);
}
.nav-links { display: flex; gap: 4px; }
.nav-link {
  height: 40px; padding: 0 20px; border-radius: 20px;
  font-size: 16px; line-height: 40px; color: #fff;
}
.current { background: #fff; color: #2f8fe6; }
.cta { background: #14b8a6; }

.hero {
  max-width: 1536px; margin: 0 auto; padding: 56px 24px 0;
  display: flex; align-items: center; justify-content: space-between; gap: 32px;
}
.intro, .quiz {
  padding: 32px; border-radius: 16px;
  border: 1px solid rgba(255, 255, 255, .2);
  background: rgba(255, 255, 255, .1);
}
.intro { flex: 0 1 591px; }
.quiz { flex: 0 1 620px; position: relative; overflow: hidden; }
.quiz > * { position: relative; }
.quiz .quiz-shape { position: absolute; left: 0; top: 0; width: 100%; height: 100%; }

.tagline {
  height: 28px; padding-left: 11px;
  border-left: 2px solid #2dd4bf; border-radius: 14px 0 0 14px;
  background: rgba(255, 255, 255, .07);
  font-size: 14px; line-height: 28px; color: rgba(255, 255, 255, .8);
}
h1 { margin-top: 8px; font-size: 60px; line-height: 60px; font-weight: 700; white-space: nowrap; }
.accent { color: #2dd4bf; }
.wave-green { color: #54c5a9; }
.wave-navy { color: #134f87; }
.benefits { list-style: none; display: grid; gap: 16px; margin: 23px 0 32px; }
.benefits li {
  display: flex; align-items: center; gap: 12px;
  font-size: 18px; line-height: 28px; color: rgba(255, 255, 255, .9);
}
.start {
  display: flex; align-items: center; gap: 8px;
  height: 52px; padding: 0 25px 0 24px; border-radius: 26px;
  background: #14b8a6; color: #fff; font-size: 18px;
  box-shadow: 0 10px 15px -3px rgba(40, 40, 90, .2), 0 4px 6px -4px rgba(40, 40, 90, .2);
}

h2 { font-size: 30px; line-height: 36px; font-weight: 400; }
.options { display: grid; gap: 12px; margin-top: 23px; }
.option {
  display: flex; align-items: center; height: 64px; padding: 0 12px;
  border-radius: 8px; background: rgba(255, 255, 255, .9); font-size: 16px;
}
.letter { padding: 0 16px; border-radius: 20px; background: #14b8a6; color: #fff; line-height: 40px; }
.answer { flex: 1; text-align: center; color: #1a2233; }

.dots { position: absolute; left: 16px; bottom: 80px; }
.watermark { position: absolute; left: 84%; bottom: 48px; color: rgba(152, 158, 160, .85); font-family: "Open Sans", sans-serif; white-space: nowrap; }
.watermark p { font-size: 19px; line-height: 26px; }
.watermark small { display: block; font-size: 14px; line-height: 20px; }

.scrollbar { width: 15px; background: #2c2c2c; display: flex; flex-direction: column; align-items: center; padding: 5px 0 4px; }
.thumb { width: 9px; height: 124px; margin-top: 6px; border-radius: 4px; background: #9f9f9f; }
.down { margin-top: auto; }

/* desktop taskbar */
.taskbar { display: flex; align-items: center; height: 48px; background: #202020; color: #fff; }
.widgets { margin-left: 16px; }
.start-logo { margin-left: auto; }
.search { display: flex; align-items: center; width: 218px; height: 32px; margin-left: 35px; padding: 0 8px 0 12px; border-radius: 16px; background: #373737; }
.search input { flex: 1; min-width: 0; padding: 0 8px; background: none; font-size: 14px; outline: 0; }
.search input::placeholder { color: #d5d5d5; opacity: 1; }
.apps { display: flex; align-items: center; gap: 20px; margin-left: -8px; }
.app { width: 24px; height: 24px; }
.app-slot { position: relative; display: grid; place-items: center; width: 24px; height: 48px; }
.app-slot::after { content: ""; position: absolute; bottom: 5px; left: 9px; width: 6px; height: 3px; border-radius: 2px; background: #9a9a9a; }
.active { width: 40px; height: 40px; margin: 0 -8px; border-radius: 4px; background: #2f2f2f; box-shadow: 0 0 0 1px #3b3b3b; }
.active::after { bottom: 1px; left: 12px; width: 16px; background: #d9a0e0; }
.face { position: absolute; right: 2px; top: 1px; }
.count { position: absolute; left: 8px; top: 6px; padding: 0 4px; border-radius: 9px; background: #dc9fe8; color: #111; font-size: 11px; line-height: 18px; font-weight: 400; }
.profile { position: absolute; left: 14px; top: 6px; width: 16px; height: 18px; border-radius: 50%; font-size: 10px; line-height: 18px; text-align: center; font-weight: 400; }
.pink { background: #ec407a; }
.violet { background: #512da8; }
.tray { display: flex; align-items: center; gap: 8px; margin: 0 20px 0 120px; }
.wifi { margin-left: 4px; }
.clock { width: 60px; font-size: 11px; line-height: 16px; text-align: right; margin: 0 2px 0 -1px; }
```
